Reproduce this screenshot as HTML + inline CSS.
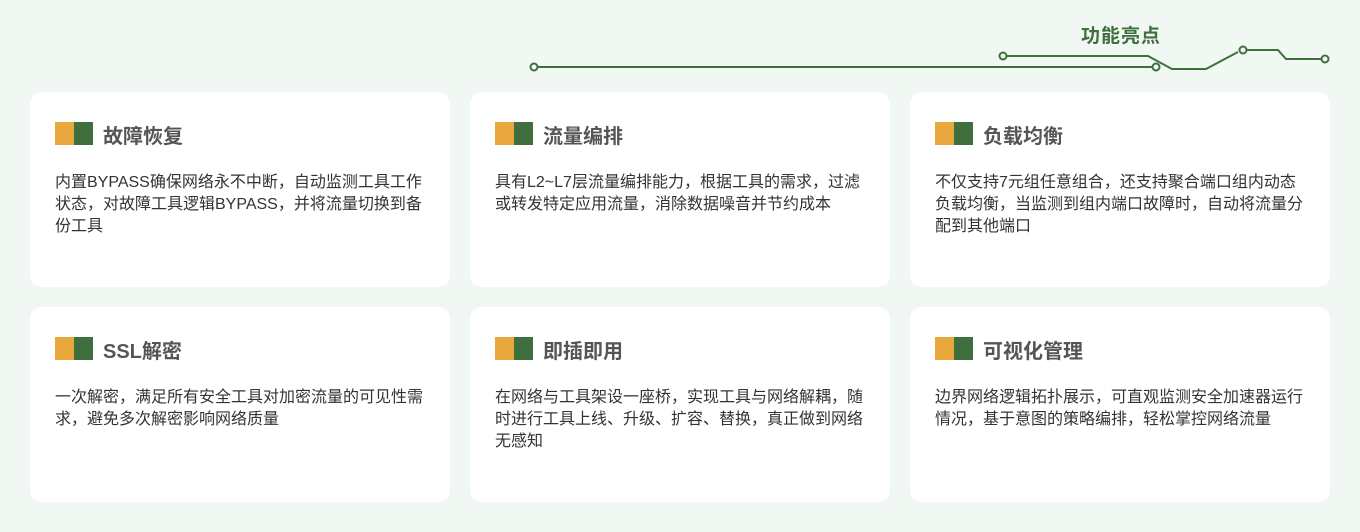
<!DOCTYPE html>
<html><head><meta charset="utf-8"><style>
body{margin:0;width:1360px;height:532px;background:#f1f7f2;font-family:"Liberation Sans","Noto Sans CJK SC",sans-serif;position:relative;overflow:hidden}
.h{position:absolute;left:1081px;top:21px;font-size:19px;font-weight:bold;color:#3e6f3d;letter-spacing:1px}
.c{position:absolute;width:420px;height:195px;background:#fff;border-radius:12px}
.ic{position:absolute;left:25px;top:30px;width:19px;height:23px;background:#e9a83e}
.ic:after{content:"";position:absolute;left:19px;top:0;width:19px;height:23px;background:#3f6f3e}
.t{position:absolute;left:73px;top:28px;font-size:20px;font-weight:bold;color:#555}
.p{position:absolute;left:25px;top:80px;white-space:nowrap;font-size:16px;line-height:22px;color:#333}
</style></head><body>
<div class="h">功能亮点</div>
<svg style="position:absolute;left:0;top:0" width="1360" height="90">
<g fill="none" stroke="#3e6f3d" stroke-width="2">
<line x1="538" y1="67" x2="1152" y2="67"/>
<polyline points="1007,56 1148,56 1172,69 1206,69 1238,52"/>
<polyline points="1247,50 1278,50 1286,59 1321,59"/>
<circle cx="534" cy="67" r="3.5" fill="#f1f7f2"/>
<circle cx="1156" cy="67" r="3.5" fill="#f1f7f2"/>
<circle cx="1003" cy="56" r="3.5" fill="#f1f7f2"/>
<circle cx="1243" cy="50" r="3.5" fill="#f1f7f2"/>
<circle cx="1325" cy="59" r="3.5" fill="#f1f7f2"/>
</g></svg>
<div class="c" style="left:30px;top:92px"><div class="ic"></div><div class="t">故障恢复</div><div class="p">内置BYPASS确保网络永不中断，自动监测工具工作<br>状态，对故障工具逻辑BYPASS，并将流量切换到备<br>份工具</div></div>
<div class="c" style="left:470px;top:92px"><div class="ic"></div><div class="t">流量编排</div><div class="p">具有L2~L7层流量编排能力，根据工具的需求，过滤<br>或转发特定应用流量，消除数据噪音并节约成本</div></div>
<div class="c" style="left:910px;top:92px"><div class="ic"></div><div class="t">负载均衡</div><div class="p">不仅支持7元组任意组合，还支持聚合端口组内动态<br>负载均衡，当监测到组内端口故障时，自动将流量分<br>配到其他端口</div></div>
<div class="c" style="left:30px;top:307px"><div class="ic"></div><div class="t">SSL解密</div><div class="p">一次解密，满足所有安全工具对加密流量的可见性需<br>求，避免多次解密影响网络质量</div></div>
<div class="c" style="left:470px;top:307px"><div class="ic"></div><div class="t">即插即用</div><div class="p">在网络与工具架设一座桥，实现工具与网络解耦，随<br>时进行工具上线、升级、扩容、替换，真正做到网络<br>无感知</div></div>
<div class="c" style="left:910px;top:307px"><div class="ic"></div><div class="t">可视化管理</div><div class="p">边界网络逻辑拓扑展示，可直观监测安全加速器运行<br>情况，基于意图的策略编排，轻松掌控网络流量</div></div>
</body></html>
